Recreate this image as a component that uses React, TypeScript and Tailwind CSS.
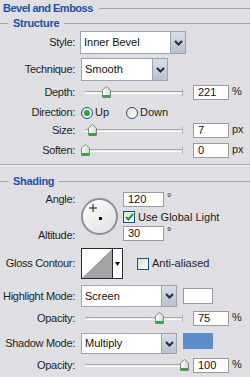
import React from "react";

const Chevron = () => (
  <svg width="9" height="6" viewBox="0 0 9 6">
    <path d="M1 1 L4.5 4.5 L8 1" fill="none" stroke="#1d2a4a" strokeWidth="2" />
  </svg>
);

function Select({ value, w, h }: { value: string; w: string; h: string }) {
  return (
    <div className={`flex ${w} ${h} border border-[#9aa3b0] bg-white`}>
      <div className="flex flex-1 items-center pl-[3px] text-[11px] text-[#111]">{value}</div>
      <div className="flex w-[15px] items-center justify-center border-l border-[#9aa3b0] bg-gradient-to-b from-[#d9dde6] to-[#b9c0cf]">
        <Chevron />
      </div>
    </div>
  );
}

function Thumb() {
  return (
    <svg width="9" height="12" viewBox="0 0 9 12">
      <defs>
        <linearGradient id="tg" x1="0" y1="0" x2="1" y2="0">
          <stop offset="0" stopColor="#ffffff" />
          <stop offset="1" stopColor="#d5d5d5" />
        </linearGradient>
      </defs>
      <path d="M0.5 4 L4.5 0.5 L8.5 4 L8.5 11.5 L0.5 11.5 Z" fill="url(#tg)" stroke="#7d8a7d" />
      <rect x="1" y="9" width="7" height="2.5" fill="#39a23b" />
    </svg>
  );
}

function Slider({ pos }: { pos: number }) {
  return (
    <div className="relative h-full w-[112px]">
      <div className="absolute left-[4px] top-[6px] h-[3px] w-[98px] border-t border-[#a8a8a8] border-b border-b-white bg-[#ecebe2]" />
      <div className="absolute left-[101px] top-[4px] h-[7px] w-[1px] bg-[#b0b0b0]" />
      <div className="absolute top-[1px]" style={{ left: pos - 4 - 81 }}>
        <Thumb />
      </div>
    </div>
  );
}

function NumBox({ value, w = "w-[36px]" }: { value: string; w?: string }) {
  return (
    <div className={`flex h-[15px] ${w} items-center border border-[#9a9a9a] bg-white pl-[4px] text-[11px] text-[#111]`}>
      {value}
    </div>
  );
}

function Label({ children }: { children: React.ReactNode }) {
  return (
    <div className="flex w-[76px] shrink-0 justify-end whitespace-nowrap pr-[1px] tracking-[-0.3px]">
      <span>{children}</span>
    </div>
  );
}

function SliderRow({ label, pos, value, unit, mt }: { label: string; pos: number; value: string; unit: string; mt: string }) {
  return (
    <div className={`flex h-[15px] items-center ${mt}`}>
      <Label>{label}</Label>
      <div className="ml-[5px] h-full">
        <Slider pos={pos} />
      </div>
      <NumBox value={value} />
      <span className="ml-[3px] self-start text-[11px] leading-[12px]">{unit}</span>
    </div>
  );
}

function Radio({ checked }: { checked?: boolean }) {
  return (
    <div className="flex h-[12px] w-[12px] items-center justify-center rounded-full border border-[#1c5180] bg-gradient-to-br from-[#dcdcd6] to-white">
      {checked && <div className="h-[6px] w-[6px] rounded-full bg-[#2ba52b]" />}
    </div>
  );
}

function Check({ checked }: { checked?: boolean }) {
  return (
    <div className="flex h-[12px] w-[12px] items-center justify-center border border-[#1c5180] bg-gradient-to-br from-[#dcdcd6] to-white">
      {checked && (
        <svg width="9" height="8" viewBox="0 0 9 8">
          <path d="M1 4 L3.5 6.5 L8 1" fill="none" stroke="#21a121" strokeWidth="2" />
        </svg>
      )}
    </div>
  );
}

function SubHead({ children, mt }: { children: React.ReactNode; mt: string }) {
  return (
    <div className={`flex h-[14px] items-center ${mt}`}>
      <div className="h-px w-[8px] bg-[#a3a3a3]" />
      <span className="px-[5px] text-[11px] font-bold tracking-[-0.3px] text-[#2051a5]">{children}</span>
      <div className="h-px flex-1 bg-[#a3a3a3]" />
    </div>
  );
}

export default function App() {
  return (
    <div className="h-[377px] w-[250px] overflow-hidden bg-[#dfdee3] font-['Liberation_Sans',Arial,sans-serif] text-[11px] leading-none text-[#1e1e1e]">
      {/* title */}
      <div className="flex h-[16px] items-center">
        <span className="pl-[3px] pr-[6px] text-[11px] font-bold tracking-[-0.5px] text-[#2051a5]">Bevel and Emboss</span>
        <div className="h-px flex-1 bg-[#a3a3a3]" />
      </div>

      <SubHead mt="">Structure</SubHead>

      <div className="mt-[1px] flex h-[23px] items-center">
        <Label>Style:</Label>
        <div className="ml-[4px]">
          <Select value="Inner Bevel" w="w-[106px]" h="h-[23px]" />
        </div>
      </div>

      <div className="mt-[4px] flex h-[23px] items-center">
        <Label>Technique:</Label>
        <div className="ml-[5px]">
          <Select value="Smooth" w="w-[87px]" h="h-[23px]" />
        </div>
      </div>

      <SliderRow label="Depth:" pos={106} value="221" unit="%" mt="mt-[4px]" />

      <div className="mt-[5px] flex h-[15px] items-center">
        <Label>Direction:</Label>
        <div className="ml-[5px] flex items-center gap-[2px]">
          <Radio checked />
          <span>Up</span>
        </div>
        <div className="ml-[17px] flex items-center gap-[2px]">
          <Radio />
          <span>Down</span>
        </div>
      </div>

      <SliderRow label="Size:" pos={92} value="7" unit="px" mt="mt-[3px]" />
      <SliderRow label="Soften:" pos={85} value="0" unit="px" mt="mt-[5px]" />

      <div className="mt-[6px] h-[2px] border-t border-[#a3a3a3] border-b border-b-[#f3f3f5]" />

      <SubHead mt="mt-[8px]">Shading</SubHead>

      {/* angle block */}
      <div className="mt-[4px] flex h-[51px]">
        <div className="flex w-[76px] shrink-0 flex-col justify-between pr-[1px] text-right tracking-[-0.3px]">
          <div className="flex h-[15px] items-center justify-end">Angle:</div>
          <div className="flex h-[15px] items-center justify-end">Altitude:</div>
        </div>
        <div className="ml-[5px] mt-[6px] flex h-[37px] w-[37px] items-center justify-center rounded-full border-2 border-[#8a8f99] bg-gradient-to-br from-white to-[#dedede] shadow-[inset_1px_1px_0_#ffffff]">
          <svg width="33" height="33" viewBox="0 0 33 33">
            <path d="M10 4 V12 M6 8 H14" stroke="#111" strokeWidth="1" />
            <rect x="16" y="17" width="3" height="3" fill="#111" />
          </svg>
        </div>
        <div className="ml-[5px] flex flex-col">
          <div className="flex items-start">
            <NumBox value="120" w="w-[41px]" />
            <span className="ml-[3px] text-[11px]">°</span>
          </div>
          <div className="mt-[4px] flex items-center gap-[3px]">
            <Check checked />
            <span>Use Global Light</span>
          </div>
          <div className="mt-[3px] flex items-start">
            <NumBox value="30" w="w-[41px]" />
            <span className="ml-[3px] text-[11px]">°</span>
          </div>
        </div>
      </div>

      {/* gloss contour */}
      <div className="mt-[5px] flex h-[31px] items-center">
        <Label>Gloss Contour:</Label>
        <div className="ml-[5px] flex h-[31px] w-[42px] border border-[#2a2a2a] bg-white">
          <svg width="30" height="29" viewBox="0 0 30 29" className="block">
            <polygon points="0,29 30,0 30,29" fill="#a3a3a6" />
          </svg>
          <div className="flex flex-1 items-center justify-center border-l border-[#2a2a2a]">
            <svg width="5" height="4" viewBox="0 0 5 4">
              <polygon points="0,0 5,0 2.5,4" fill="#111" />
            </svg>
          </div>
        </div>
        <div className="ml-[14px] flex items-center gap-[3px]">
          <Check />
          <span>Anti-aliased</span>
        </div>
      </div>

      {/* highlight */}
      <div className="mt-[6px] flex h-[22px] items-center">
        <Label>Highlight Mode:</Label>
        <div className="ml-[5px]">
          <Select value="Screen" w="w-[96px]" h="h-[22px]" />
        </div>
        <div className="ml-[6px] h-[16px] w-[30px] border border-[#9a9a9a] bg-white" />
      </div>

      <SliderRow label="Opacity:" pos={159} value="75" unit="%" mt="mt-[4px]" />

      {/* shadow */}
      <div className="mt-[7px] flex h-[21px] items-center">
        <Label>Shadow Mode:</Label>
        <div className="ml-[5px]">
          <Select value="Multiply" w="w-[96px]" h="h-[21px]" />
        </div>
        <div className="ml-[6px] h-[16px] w-[30px] self-start bg-[#5b8dca]" />
      </div>

      <SliderRow label="Opacity:" pos={184} value="100" unit="%" mt="mt-[4px]" />
    </div>
  );
}
